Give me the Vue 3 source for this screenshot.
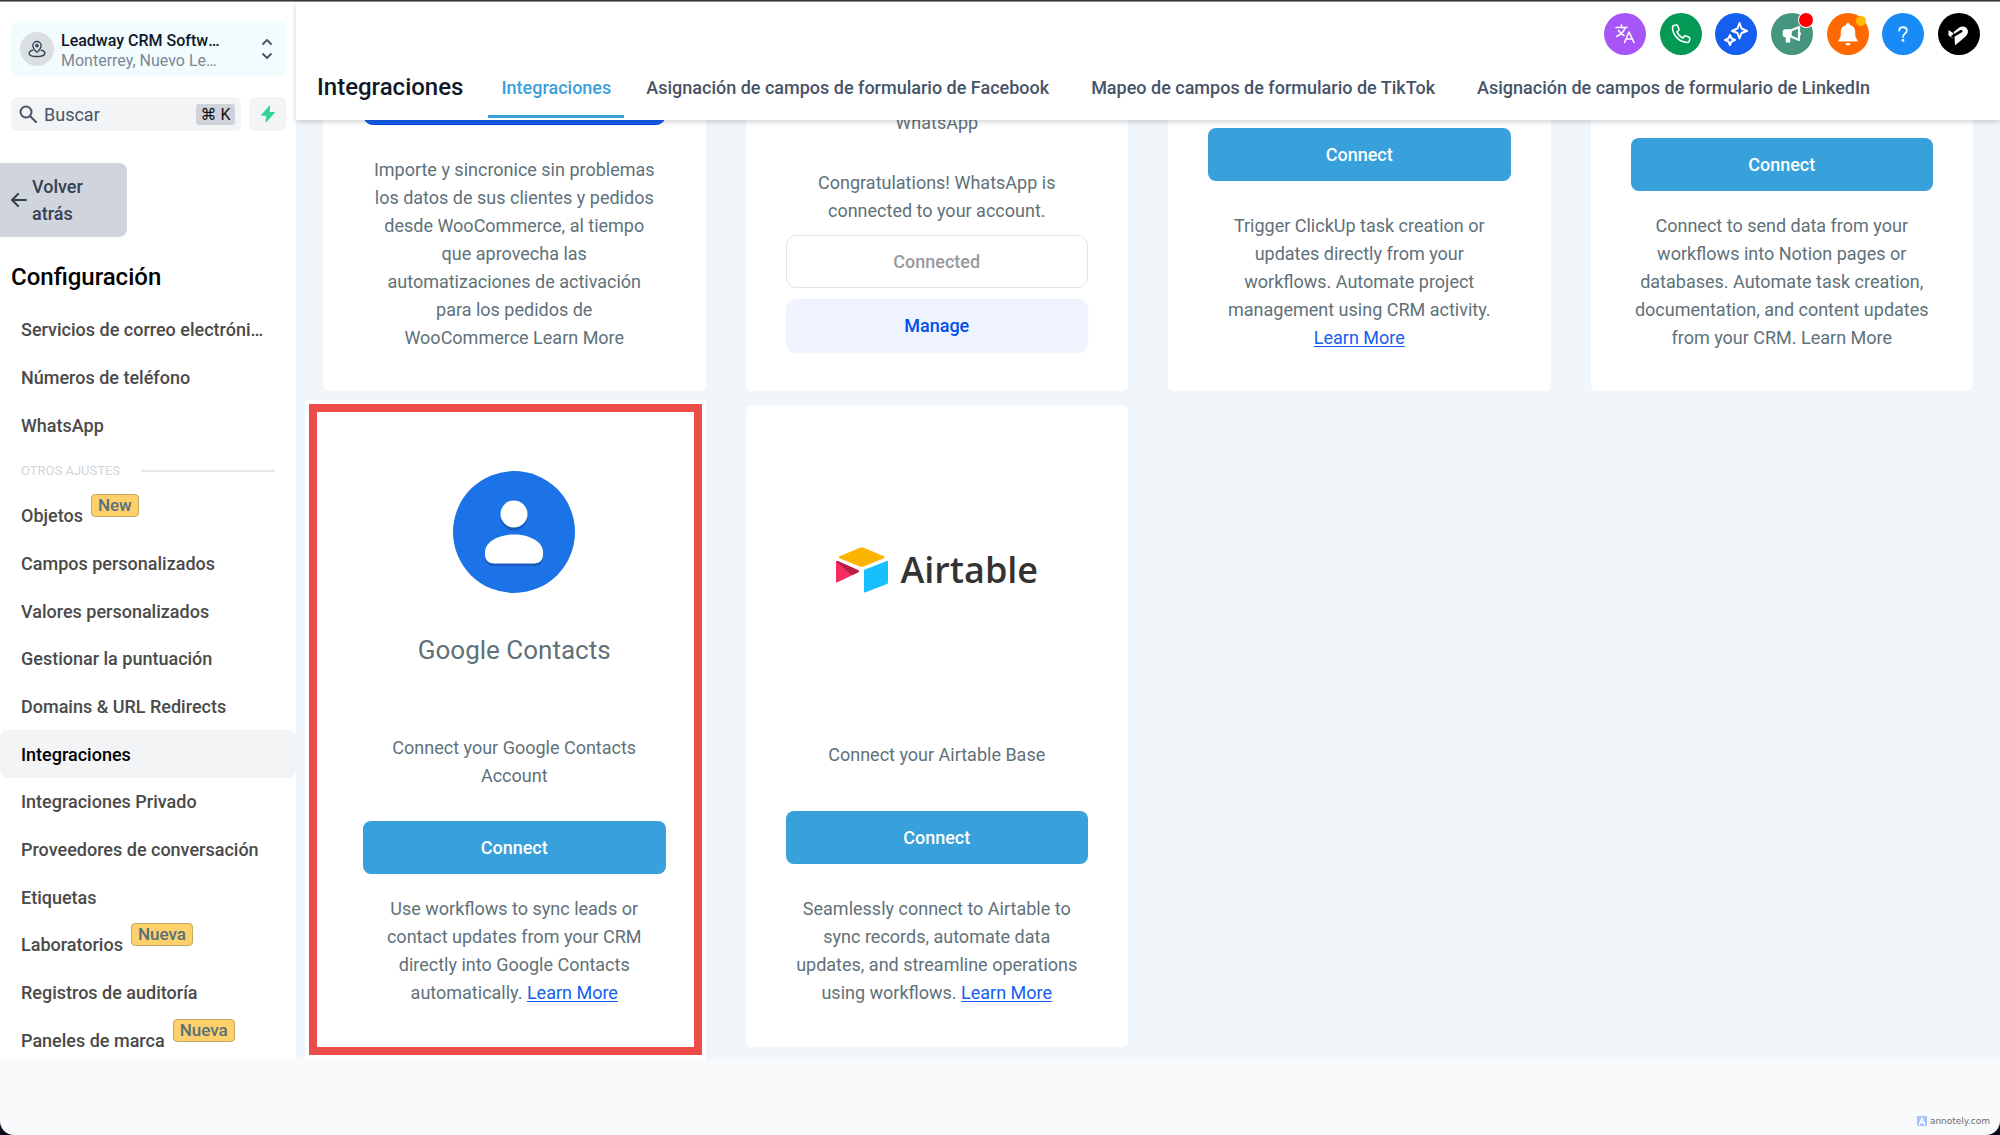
<script setup>
const mainLinks = ['Servicios de correo electrónico', 'Números de teléfono', 'WhatsApp']

const otherLinks = [
  { label: 'Objetos', badge: 'New' },
  { label: 'Campos personalizados' },
  { label: 'Valores personalizados' },
  { label: 'Gestionar la puntuación' },
  { label: 'Domains & URL Redirects' },
  { label: 'Integraciones', active: true },
  { label: 'Integraciones Privado' },
  { label: 'Proveedores de conversación' },
  { label: 'Etiquetas' },
  { label: 'Laboratorios', badge: 'Nueva' },
  { label: 'Registros de auditoría' },
  { label: 'Paneles de marca', badge: 'Nueva' }
]

const tabs = [
  { label: 'Integraciones', active: true },
  { label: 'Asignación de campos de formulario de Facebook' },
  { label: 'Mapeo de campos de formulario de TikTok' },
  { label: 'Asignación de campos de formulario de LinkedIn' }
]
</script>

<template>
  <div class="desktop">
    <div class="window">
      <div class="window-edge"></div>
      <div class="workspace">
        <aside class="sidebar">
          <button class="location" type="button">
            <span class="avatar">
              <svg width="18" height="18" viewBox="0 0 24 24" fill="none" stroke="#344054" stroke-width="1.8" stroke-linecap="round" stroke-linejoin="round">
                <path d="M12 16.500C9 13.500 6.500 11 6.500 7.500a5.500 5.500 0 0 1 11 0c0 3.500-2.500 6-5.500 9z" />
                <circle cx="12" cy="7.500" r="1.500" />
                <path d="M6.500 13.500C3.500 14.200 1.500 15.500 1.500 17.500c0 2.800 4.700 4.500 10.500 4.500s10.500-1.700 10.500-4.500c0-2-2-3.300-5-4" />
              </svg>
            </span>
            <span class="location-text">
              <strong>Leadway CRM Software</strong>
              <span>Monterrey, Nuevo Leon</span>
            </span>
            <svg width="12" height="22" viewBox="0 0 12 22" fill="none" stroke="#475467" stroke-width="1.800" stroke-linecap="round" stroke-linejoin="round">
              <path d="M2 6l4-4 4 4M2 16l4 4 4-4" />
            </svg>
          </button>

          <div class="tools">
            <label class="search">
              <svg width="18" height="18" viewBox="0 0 18 18" fill="none" stroke="#475467" stroke-width="2" stroke-linecap="round">
                <circle cx="7" cy="7" r="5.500" />
                <path d="M11.200 11.200L17 17" />
              </svg>
              <input type="text" placeholder="Buscar" aria-label="Buscar" />
              <kbd>⌘ K</kbd>
            </label>
            <button class="bolt" type="button" aria-label="Acciones rápidas">
              <svg width="16" height="18" viewBox="0 0 16 18"><path d="M9.500 1L1.500 10.200h5L6 17l8.500-9.500H9.200z" fill="#32d296" stroke="#32d296" stroke-linejoin="round" /></svg>
            </button>
          </div>

          <button class="back" type="button">
            <svg width="16" height="14" viewBox="0 0 16 14" fill="none" stroke="#344054" stroke-width="2" stroke-linecap="round" stroke-linejoin="round">
              <path d="M15 7H1.500M7 1L1 7l6 6" />
            </svg>
            <span>Volver<br />atrás</span>
          </button>

          <h2>Configuración</h2>

          <ul class="links">
            <li v-for="label in mainLinks" :key="label">
              <a href="#"><span class="link-label">{{ label }}</span></a>
            </li>
          </ul>
          <div class="divider"><span>OTROS AJUSTES</span></div>
          <ul class="links other">
            <li v-for="link in otherLinks" :key="link.label">
              <a href="#" :class="{ active: link.active }">
                <span class="link-label">{{ link.label }}</span>
                <span v-if="link.badge" class="badge">{{ link.badge }}</span>
              </a>
            </li>
          </ul>
        </aside>

        <div class="page">
          <header>
            <div class="actions">
              <button type="button" class="purple" aria-label="Idioma">
                <svg width="22" height="22" viewBox="0 0 22 22" fill="none" stroke="#fff" stroke-width="1.600" stroke-linecap="round" stroke-linejoin="round">
                  <path d="M2 4.500h11M7.500 2v2.500M11 4.500C10 9 6 12 2.500 13.500M4.500 7.500c1.500 2.500 3.500 4 5.500 5" />
                  <path d="M10.500 19.500L15 9l5 10.500M12 16h6.500" />
                </svg>
              </button>
              <button type="button" class="green" aria-label="Teléfono">
                <svg width="22" height="22" viewBox="0 0 22 22" fill="none" stroke="#fff" stroke-width="1.600" stroke-linejoin="round">
                  <path d="M4 2.500L6 2c.7-.2 1.300.1 1.600.8l1.300 3c.3.600.1 1.300-.4 1.700L7 8.800c1 2.700 3.200 5 6 6.200l1.300-1.700c.400-.5 1.100-.7 1.700-.4l3 1.400c.6.300.9.900.8 1.600l-.6 2.400c-.2.700-.7 1.200-1.500 1.200C9.700 19.500 2.500 12.500 2.500 4c0-.8.700-1.300 1.500-1.500z" />
                </svg>
              </button>
              <button type="button" class="blue" aria-label="Asistente">
                <svg width="26" height="26" viewBox="0 0 26 26" fill="none" stroke="#fff" stroke-width="2" stroke-linejoin="round">
                  <path d="M16.500 2l2 5.500L24 10l-5.500 2-2 5.500-2-5.500L9 10l5.500-2.500z" />
                  <path d="M7 14l1.500 3.500L12 19l-3.500 1.500L7 24l-1.500-3.500L2 19l3.500-1.500z" />
                </svg>
              </button>
              <button type="button" class="teal" aria-label="Novedades">
                <svg width="20" height="20" viewBox="0 0 20 20" fill="none" stroke="#fff" stroke-linejoin="round">
                  <path d="M3 6h6v6.500H3A1.500 1.500 0 0 1 1.500 11V7.500A1.500 1.500 0 0 1 3 6z" fill="#fff" stroke-width="1.500" />
                  <path d="M9 6.500l8-3.500v13l-8-3.500" stroke-width="2.200" />
                  <path d="M5 12.500v6M7 12.500v6" stroke-width="2.600" />
                  <path d="M17 8a2 2 0 0 1 0 3.500" stroke-width="1.800" />
                </svg>
                <i class="dot red-dot"></i>
              </button>
              <button type="button" class="orange" aria-label="Notificaciones">
                <svg width="22" height="24" viewBox="0 0 22 24" fill="#fff">
                  <path d="M11 1a2 2 0 0 0-2 2c-3.400.9-5.200 3.500-5.200 7v4L1.500 18.500v1h19v-1L18.200 14v-4c0-3.500-1.800-6.100-5.200-7a2 2 0 0 0-2-2zM8.500 21a2.500 2.500 0 0 0 5 0z" />
                </svg>
                <i class="dot amber-dot"></i>
              </button>
              <button type="button" class="sky" aria-label="Ayuda">
                <svg width="12" height="18" viewBox="0 0 14 20" fill="none" stroke="#fff" stroke-width="2" stroke-linecap="round" stroke-linejoin="round">
                  <path d="M2.500 6A4.500 4.500 0 0 1 7 2c2.600 0 4.500 1.700 4.500 4 0 3.300-4.500 3.700-4.500 7.500" />
                  <circle cx="7" cy="17.500" r=".600" fill="#fff" />
                </svg>
              </button>
              <button type="button" class="black" aria-label="Cuenta">
                <svg width="22" height="22" viewBox="0 0 22 22">
                  <path d="M.5 7l4.500 3v5.500l-4.500-3z" fill="#fff" />
                  <path d="M5.500 9L11 4.700C15.500 1.500 22 5.500 19.300 11c-1.300 2.800-4.300 4.500-12.300 11.500l-.5-8.500z" fill="#fff" />
                  <path d="M4.500 13.300L13.200 8.200" stroke="#000" stroke-width="2.600" stroke-linecap="round" />
                </svg>
              </button>
            </div>
            <nav>
              <h1>Integraciones</h1>
              <a v-for="tab in tabs" :key="tab.label" href="#" :class="{ active: tab.active }">{{ tab.label }}</a>
            </nav>
          </header>

          <main>
            <div class="cards scrolled">
              <article class="card">
                <button type="button" class="connect royal" aria-label="Connect"></button>
                <p class="about">Importe y sincronice sin problemas los datos de sus clientes y pedidos desde WooCommerce, al tiempo que aprovecha las automatizaciones de activación para los pedidos de WooCommerce&nbsp;Learn More</p>
              </article>
              <article class="card">
                <p class="product">WhatsApp</p>
                <p>Congratulations! WhatsApp is connected to your account.</p>
                <button type="button" class="connected" disabled>Connected</button>
                <button type="button" class="manage">Manage</button>
              </article>
              <article class="card">
                <button type="button" class="connect">Connect</button>
                <p class="about">Trigger ClickUp task creation or updates directly from your workflows. Automate project management using CRM activity. <a href="#">Learn More</a></p>
              </article>
              <article class="card">
                <button type="button" class="connect">Connect</button>
                <p class="about near full">Connect to send data from your workflows into Notion pages or databases. Automate task creation, documentation, and content updates from your CRM. Learn More</p>
              </article>
            </div>

            <div class="cards">
              <article class="card highlighted">
                <svg class="contacts-logo" width="122" height="122" viewBox="0 0 122 122">
                  <circle cx="61" cy="61" r="61" fill="#1c73e8" />
                  <g fill="#185abc">
                    <circle cx="61" cy="46" r="13.500" />
                    <path d="M32 83c0-10 13-17 29-17s29 7 29 17v3c0 6-4 9-9 9H41c-5 0-9-3-9-9z" />
                  </g>
                  <g fill="#fff">
                    <circle cx="61" cy="43" r="13.500" />
                    <path d="M32 81c0-10 13-17.500 29-17.500S90 71 90 81v3c0 5-4 8.500-9 8.500H41c-5 0-9-3.500-9-8.500z" />
                  </g>
                </svg>
                <h3>Google Contacts</h3>
                <p class="lead">Connect your Google Contacts Account</p>
                <button type="button" class="connect">Connect</button>
                <p class="about near">Use workflows to sync leads or contact updates from your CRM directly into Google Contacts automatically. <a href="#">Learn More</a></p>
                <div class="marker"></div>
              </article>
              <article class="card">
                <div class="airtable">
                  <svg width="54" height="46" viewBox="0 0 54 46">
                    <path d="M25 .8c1.200-.5 2.500-.5 3.700 0L49 9.300c1 .4 1 1.500 0 1.900l-20.500 8.200c-1.200.5-2.500.5-3.700 0L4.500 11.200c-1-.4-1-1.500 0-1.900z" fill="#fcb400" />
                    <path d="M29 24c0-.8.400-1.300 1-1.500l21.800-8.400c.8-.3 1.200.1 1.200.8v20.600c0 .8-.3 1.200-1 1.500L30.200 45.400c-.8.300-1.200-.1-1.200-.8z" fill="#18bfff" />
                    <path d="M23.300 25.200L2.500 35.300c-1 .4-1.500 0-1.500-.8V15.200c0-1 .8-1.500 1.700-1.100l20.600 9.200c.8.400.8 1.500 0 1.900z" fill="#f82b60" />
                    <path d="M23.300 25.200l-6.500 3.100L1.300 14.500c.4-.5.9-.6 1.400-.4l20.600 9.200c.8.400.8 1.500 0 1.900z" fill="#ba1e45" />
                  </svg>
                  <span>Airtable</span>
                </div>
                <p class="lead">Connect your Airtable Base</p>
                <button type="button" class="connect">Connect</button>
                <p class="about">Seamlessly connect to Airtable to sync records, automate data updates, and streamline operations using workflows. <a href="#">Learn More</a></p>
              </article>
            </div>
          </main>
        </div>
      </div>
      <footer>
        <svg width="10" height="10" viewBox="0 0 10 10"><rect width="10" height="10" rx="1" fill="#a5c3fb" /><path d="M2 9l3-7 3 7M3.500 6.500h3" fill="none" stroke="#fff" stroke-width="1.300" /></svg>
        <span>annotely.com</span>
      </footer>
    </div>
  </div>
</template>

<style>
body {
  margin: 0;
}
</style>

<style scoped>
* {
  box-sizing: border-box;
}
.desktop {
  min-height: 100vh;
  display: flex;
  background: #08081f;
  font-family: Roboto, "Liberation Sans", sans-serif;
  color: #607179;
}
.window {
  flex: 1;
  min-width: 0;
  display: flex;
  flex-direction: column;
  background: #f9fafc;
  border-radius: 0 0 14px 14px;
  overflow: hidden;
}
.window-edge {
  height: 2px;
  background: #38363a;
  border-bottom: 1px solid #8f8d91;
}
button {
  font: inherit;
  border: 0;
  padding: 0;
  cursor: pointer;
}
h1, h2, h3, p, ul {
  margin: 0;
  padding: 0;
}
.workspace {
  display: flex;
}

/* sidebar */
.sidebar {
  width: 296px;
  flex: none;
  display: flex;
  flex-direction: column;
  background: #fff;
  padding-top: 19px;
  overflow: hidden;
}
.location {
  display: flex;
  align-items: center;
  height: 55px;
  margin: 0 10px 0 11px;
  padding: 0 13px 0 9px;
  border-radius: 8px;
  background: #f2fcff;
  text-align: left;
}
.avatar {
  width: 34px;
  height: 34px;
  flex: none;
  display: flex;
  align-items: center;
  justify-content: center;
  border-radius: 50%;
  background: #dadfe1;
}
.location-text {
  width: 160px;
  margin: 0 auto 0 7px;
  padding-top: 4px;
  font-size: 16px;
  line-height: 20px;
  color: #7d8794;
}
.location-text > * {
  display: block;
  overflow: hidden;
  text-overflow: ellipsis;
  white-space: nowrap;
}
.location-text strong {
  font-weight: 500;
  color: #101828;
}
.tools {
  display: flex;
  gap: 8px;
  margin: 21px 10px 0 11px;
  height: 34px;
}
.search {
  flex: 1;
  min-width: 0;
  display: flex;
  align-items: center;
  gap: 7px;
  padding: 0 6px 0 8px;
  border-radius: 6px;
  background: #f2f4f6;
}
.search svg {
  flex: none;
}
.search input {
  flex: 1;
  min-width: 0;
  border: 0;
  padding: 0;
  background: none;
  font: inherit;
  font-size: 18px;
}
.search input::placeholder {
  color: #475467;
  opacity: 1;
}
kbd {
  width: 39px;
  border-radius: 3px;
  background: #d0d3dc;
  color: #101010;
  font-family: Roboto, "DejaVu Sans", sans-serif;
  font-size: 16px;
  line-height: 21px;
  text-align: center;
  white-space: nowrap;
}
.bolt {
  width: 37px;
  display: flex;
  align-items: center;
  justify-content: center;
  border-radius: 6px;
  background: #f2f4f6;
}
.back {
  width: 127px;
  height: 74px;
  margin-top: 32px;
  padding-left: 11px;
  display: flex;
  align-items: center;
  gap: 5px;
  border-radius: 0 8px 8px 0;
  background: #d0d4dd;
  color: #344054;
  font-size: 18px;
  font-weight: 500;
  line-height: 27px;
  text-align: left;
}
h2 {
  margin: 24px 0 12px 11px;
  color: #000;
  font-size: 24px;
  font-weight: 500;
  line-height: 32px;
}
.links {
  list-style: none;
}
.links a {
  display: flex;
  align-items: center;
  height: 48px;
  padding: 0 28px 0 21px;
  border-radius: 8px;
  color: #4a4a4a;
  font-size: 18px;
  font-weight: 500;
  text-decoration: none;
}
.links a.active {
  background: #f2f4f6;
  color: #000;
}
.link-label {
  overflow: hidden;
  text-overflow: ellipsis;
  white-space: nowrap;
}
.links.other {
  flex: 1;
  display: grid;
  grid-auto-rows: 1fr;
  margin-bottom: -5px;
}
.links.other a {
  height: 100%;
}
.badge {
  height: 23px;
  margin: 0 0 20px 8px;
  padding: 0 6px;
  border: 1px solid #c4a866;
  border-radius: 4px;
  background: #fdd06b;
  color: #56707c;
  font-size: 17px;
  line-height: 21px;
}
.divider {
  height: 43px;
  display: flex;
  align-items: center;
  gap: 21px;
  padding: 0 21px;
  color: #d0d5dd;
  font-size: 13px;
}
.divider::after {
  content: "";
  flex: 1;
  height: 2px;
  background: #e4e7ec;
}
.links.other li {
  min-height: 0;
}
.links.other a {
  min-height: 0;
}

/* header */
.page {
  flex: 1;
  min-width: 0;
  display: flex;
  flex-direction: column;
}
header {
  position: relative;
  z-index: 1;
  background: #fff;
  padding-bottom: 2px;
  box-shadow: 0 2px 5px rgba(0, 0, 0, 0.18);
}
.actions {
  width: 376px;
  height: 58px;
  margin: 0 20px 0 auto;
  display: flex;
  align-items: center;
  justify-content: space-between;
  padding-top: 6px;
}
.actions button {
  position: relative;
  width: 42px;
  height: 42px;
  display: flex;
  align-items: center;
  justify-content: center;
  border-radius: 50%;
}
.purple { background: #a855f7; }
.green { background: #049a55; }
.blue { background: #155eef; }
.teal { background: #46967f; }
.orange { background: #ff6900; }
.sky { background: #188bf6; }
.black { background: #000; }
.dot {
  position: absolute;
  border-radius: 50%;
}
.red-dot {
  top: 0;
  right: 0;
  width: 14px;
  height: 14px;
  background: #f00;
  box-shadow: 0 0 0 1px #fff;
}
.amber-dot {
  top: 3px;
  right: 3px;
  width: 10px;
  height: 10px;
  background: #ffbc00;
}
nav {
  height: 58px;
  display: flex;
  padding-left: 21px;
  line-height: 55px;
  white-space: nowrap;
}
h1 {
  margin-right: 25px;
  color: #101828;
  font-size: 24px;
  font-weight: 500;
}
nav a {
  margin-left: 42px;
  border-bottom: 3px solid transparent;
  color: #475467;
  font-size: 18px;
  font-weight: 500;
  text-decoration: none;
}
nav a.active {
  margin: 0 -20px 0 0;
  padding: 0 13px;
  border-color: #38a0db;
  color: #38a0db;
}

/* cards */
main {
  display: flex;
  flex-direction: column;
  gap: 14px;
  padding: 0 27px 12px;
  background: #f1f6fa;
}
.cards {
  display: grid;
  grid-template-columns: repeat(4, 1fr);
  gap: 40px;
}
.card {
  display: flex;
  flex-direction: column;
  align-items: center;
  justify-content: flex-end;
  padding: 66px 40px 40px;
  border-radius: 6px;
  background: #fff;
  font-size: 18px;
  line-height: 28px;
  text-align: center;
}
.scrolled .card {
  height: 271px;
  padding-top: 0;
  padding-bottom: 39px;
  border-radius: 0 0 6px 6px;
  overflow: hidden;
}
.scrolled .card > * {
  flex: none;
}
.card a {
  color: #155eef;
  text-underline-offset: 2px;
}
.card button {
  width: 100%;
  height: 53px;
  border-radius: 8px;
  font-weight: 500;
}
.connect {
  background: #38a0db;
  color: #fff;
}
.card .royal {
  background: #155eef;
  border: 1px solid #004eeb;
  border-radius: 10px;
}
.about {
  margin-top: 31px;
  padding: 0 8px;
}
.about.near {
  margin-top: 21px;
}
.about.full {
  padding: 0;
}
.product {
  margin-bottom: 32px;
}
.card .connected {
  margin: 10px 0 11px;
  border: 1px solid #e4e5e9;
  border-radius: 10px;
  background: #fff;
  color: #999;
}
.card .manage {
  border-radius: 10px;
  background: #eff3ff;
  color: #004eeb;
  box-shadow: 0 1px 2px rgba(16, 24, 40, 0.06);
}
.highlighted {
  position: relative;
}
h3 {
  margin: 37px 0 64px;
  font-size: 26px;
  font-weight: 400;
  line-height: 40px;
}
.lead {
  margin-bottom: 31px;
}
.airtable {
  display: flex;
  align-items: center;
  gap: 11px;
  margin-bottom: 148px;
  color: #333;
  font-family: "Open Sans", Roboto, sans-serif;
  font-size: 36px;
  font-weight: 600;
  line-height: 46px;
}
.airtable + .lead {
  margin-bottom: 42px;
}
.marker {
  position: absolute;
  inset: -1px 4px -8px -14px;
  border: 8px solid #ec4c4a;
  box-shadow: 0 0 0 4px #fff, inset 0 0 0 6px #fff;
  pointer-events: none;
}

footer {
  flex: 1;
  display: flex;
  align-items: flex-end;
  justify-content: flex-end;
  gap: 3px;
  padding: 0 10px 7px 0;
  color: #6b6b6b;
  font-family: "DejaVu Sans", sans-serif;
  font-size: 9px;
  line-height: 14px;
}
footer svg {
  margin-bottom: 2px;
}
</style>
